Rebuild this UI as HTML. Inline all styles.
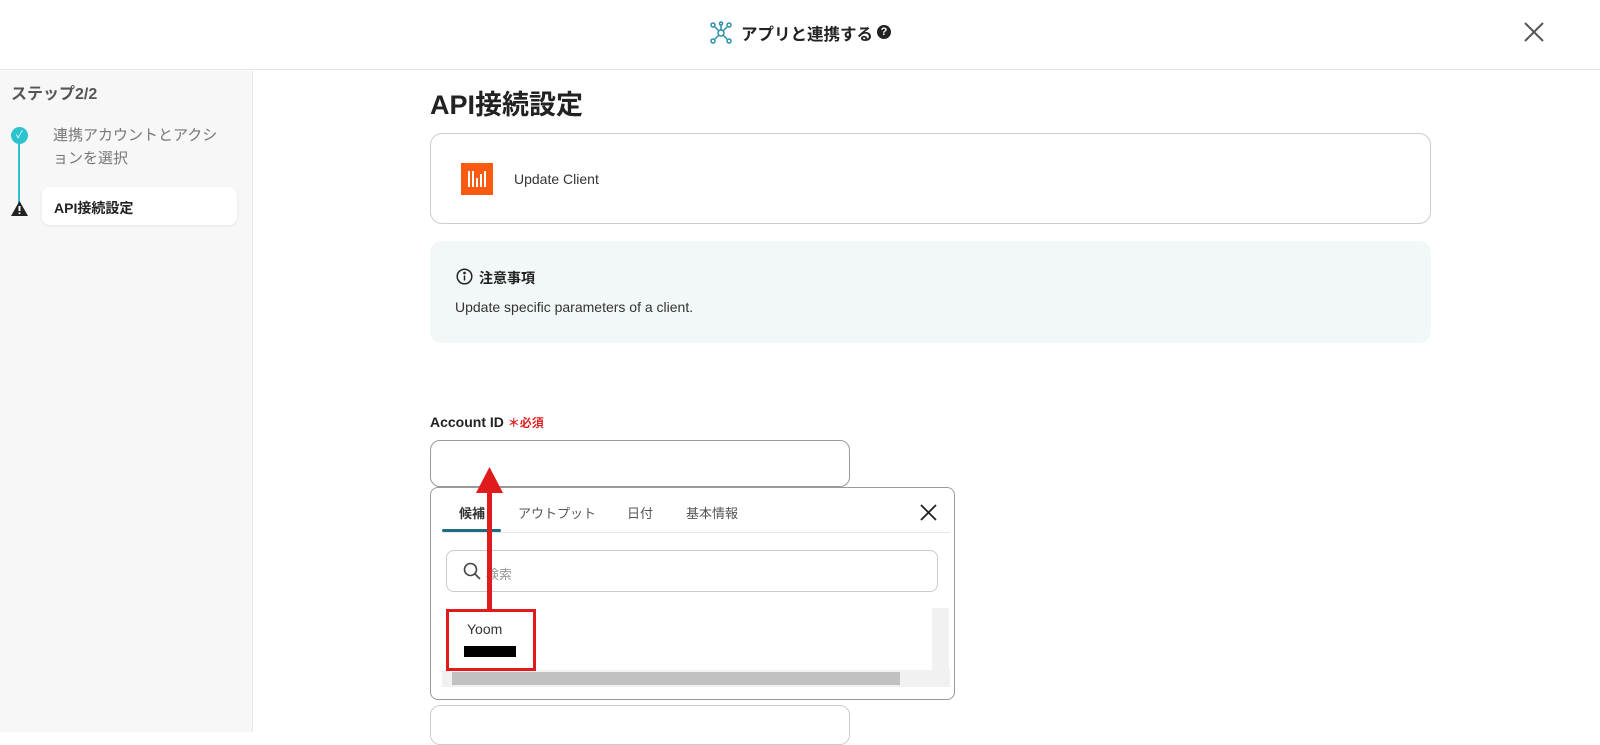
<!DOCTYPE html>
<html><head><meta charset="utf-8"><style>
*{box-sizing:border-box;margin:0;padding:0}
body{width:1600px;height:732px;overflow:hidden;background:#fff;font-family:"Liberation Sans","Noto Sans CJK JP",sans-serif;color:#222;position:relative}
.abs{position:absolute}
</style></head><body>
<div class="abs" style="left:0;top:0;width:1600px;height:70px;border-bottom:1px solid #e4e4e4;background:#fff"></div>
<svg class="abs" style="left:709px;top:21px" width="24" height="24" viewBox="0 0 24 24" fill="none" stroke="#2a8fa8" stroke-width="1.5"><circle cx="12" cy="12" r="3"/><circle cx="4" cy="4" r="2"/><circle cx="20" cy="4" r="2"/><circle cx="4" cy="20" r="2"/><circle cx="20" cy="20" r="2"/><circle cx="12" cy="2.5" r="1.5"/><path d="M6 6l4 4M18 6l-4 4M6 18l4-4M18 18l-4-4M12 4v5"/></svg>
<div class="abs" style="left:741px;top:21px;font-size:16.5px;font-weight:bold;color:#222;white-space:nowrap">アプリと連携する</div>
<div class="abs" style="left:877px;top:25px;width:14px;height:14px;border-radius:50%;background:#222;color:#fff;font-size:11px;font-weight:bold;text-align:center;line-height:14px">?</div>
<svg class="abs" style="left:1524px;top:22px" width="20" height="20" viewBox="0 0 20 20" stroke="#555" stroke-width="2"><path d="M1 1L19 19M19 1L1 19"/></svg>

<div class="abs" style="left:0;top:71px;width:253px;height:661px;background:#f7f7f7;border-right:1px solid #e6e6e6"></div>
<div class="abs" style="left:11px;top:80px;font-size:16px;font-weight:bold;color:#555">ステップ2/2</div>
<div class="abs" style="left:18px;top:140px;width:2px;height:68px;background:#2cc3cf"></div>
<div class="abs" style="left:11px;top:127px;width:17px;height:17px;border-radius:50%;background:#2cc3cf;color:#fff;font-size:10px;text-align:center;line-height:17px">✓</div>
<div class="abs" style="left:53px;top:124px;font-size:15px;color:#777;line-height:23px;width:168px">連携アカウントとアクションを選択</div>
<svg class="abs" style="left:11px;top:201px" width="17" height="15" viewBox="0 0 17 15"><path d="M8.5 0L17 15H0z" fill="#222"/><path d="M8.5 5v5" stroke="#fff" stroke-width="2"/><circle cx="8.5" cy="12.3" r="1" fill="#fff"/></svg>
<div class="abs" style="left:42px;top:187px;width:195px;height:38px;background:#fff;border-radius:8px;box-shadow:0 1px 3px rgba(0,0,0,.08);font-size:14px;font-weight:bold;padding:11px 12px;color:#222">API接続設定</div>

<div class="abs" style="left:430px;top:83px;font-size:27px;font-weight:bold;color:#222">API接続設定</div>
<div class="abs" style="left:430px;top:133px;width:1001px;height:91px;border:1px solid #ccc;border-radius:12px"></div>
<div class="abs" style="left:461px;top:163px;width:32px;height:32px;background:#fa5a10"></div>
<svg class="abs" style="left:461px;top:163px" width="32" height="32"><g fill="#fff"><rect x="7" y="8" width="2" height="16"/><rect x="11" y="8" width="2" height="16"/><rect x="15" y="15" width="2" height="9"/><rect x="19" y="11" width="2" height="13"/><rect x="23" y="8" width="2" height="16"/></g></svg>
<div class="abs" style="left:514px;top:171px;font-size:14px;color:#333">Update Client</div>

<div class="abs" style="left:430px;top:241px;width:1001px;height:102px;background:#f1f8f7;border-radius:12px"></div>
<svg class="abs" style="left:456px;top:268px" width="17" height="17" viewBox="0 0 17 17" fill="none" stroke="#222" stroke-width="1.5"><circle cx="8.5" cy="8.5" r="7.3"/><path d="M8.5 7.5v5"/><circle cx="8.5" cy="5" r=".6" fill="#222"/></svg>
<div class="abs" style="left:479px;top:268px;font-size:14px;font-weight:bold">注意事項</div>
<div class="abs" style="left:455px;top:299px;font-size:14px;color:#333">Update specific parameters of a client.</div>

<div class="abs" style="left:430px;top:414px;font-size:14px;font-weight:bold">Account ID <span style="color:#e02020;font-size:12px">＊必須</span></div>
<div class="abs" style="left:430px;top:440px;width:420px;height:47px;border:1px solid #999;border-radius:10px"></div>
<div class="abs" style="left:430px;top:705px;width:420px;height:40px;border:1px solid #ccc;border-radius:10px"></div>

<div class="abs" style="left:430px;top:487px;width:525px;height:213px;border:1px solid #999;border-radius:8px;background:#fff"></div>
<div class="abs" style="left:442px;top:532px;width:508px;height:1px;background:#e6e6e6"></div>
<div class="abs" style="left:442px;top:529px;width:59px;height:3px;background:#1d6b85;border-radius:2px"></div>
<div class="abs" style="left:459px;top:503px;font-size:13px;font-weight:bold;color:#333">候補</div>
<div class="abs" style="left:518px;top:503px;font-size:13px;color:#555">アウトプット</div>
<div class="abs" style="left:627px;top:503px;font-size:13px;color:#555">日付</div>
<div class="abs" style="left:686px;top:503px;font-size:13px;color:#555">基本情報</div>
<svg class="abs" style="left:920px;top:504px" width="17" height="17" stroke="#222" stroke-width="1.8"><path d="M1 1L16 16M16 1L1 16"/></svg>
<div class="abs" style="left:446px;top:550px;width:492px;height:42px;border:1px solid #ccc;border-radius:8px"></div>
<svg class="abs" style="left:463px;top:562px" width="18" height="18" fill="none" stroke="#444" stroke-width="1.6"><circle cx="7.5" cy="7.5" r="6"/><path d="M12 12l5 5"/></svg>
<div class="abs" style="left:486px;top:564px;font-size:13px;color:#999">検索</div>
<div class="abs" style="left:442px;top:608px;width:508px;height:80px;background:#fff"></div>
<div class="abs" style="left:932px;top:608px;width:17px;height:62px;background:#f1f1f1"></div>
<div class="abs" style="left:442px;top:670px;width:508px;height:17px;background:#f1f1f1"></div>
<div class="abs" style="left:452px;top:672px;width:448px;height:13px;background:#c1c1c1"></div>
<div class="abs" style="left:467px;top:621px;font-size:14px;color:#333">Yoom</div>
<div class="abs" style="left:464px;top:646px;width:52px;height:11px;background:#000"></div>
<div class="abs" style="left:446px;top:609px;width:90px;height:62px;border:3px solid #e01b1b"></div>
<div class="abs" style="left:487px;top:488px;width:5px;height:122px;background:#e01b1b"></div>
<svg class="abs" style="left:476px;top:467px" width="27" height="26"><path d="M13.5 0L27 26H0z" fill="#e01b1b"/></svg>
</body></html>
